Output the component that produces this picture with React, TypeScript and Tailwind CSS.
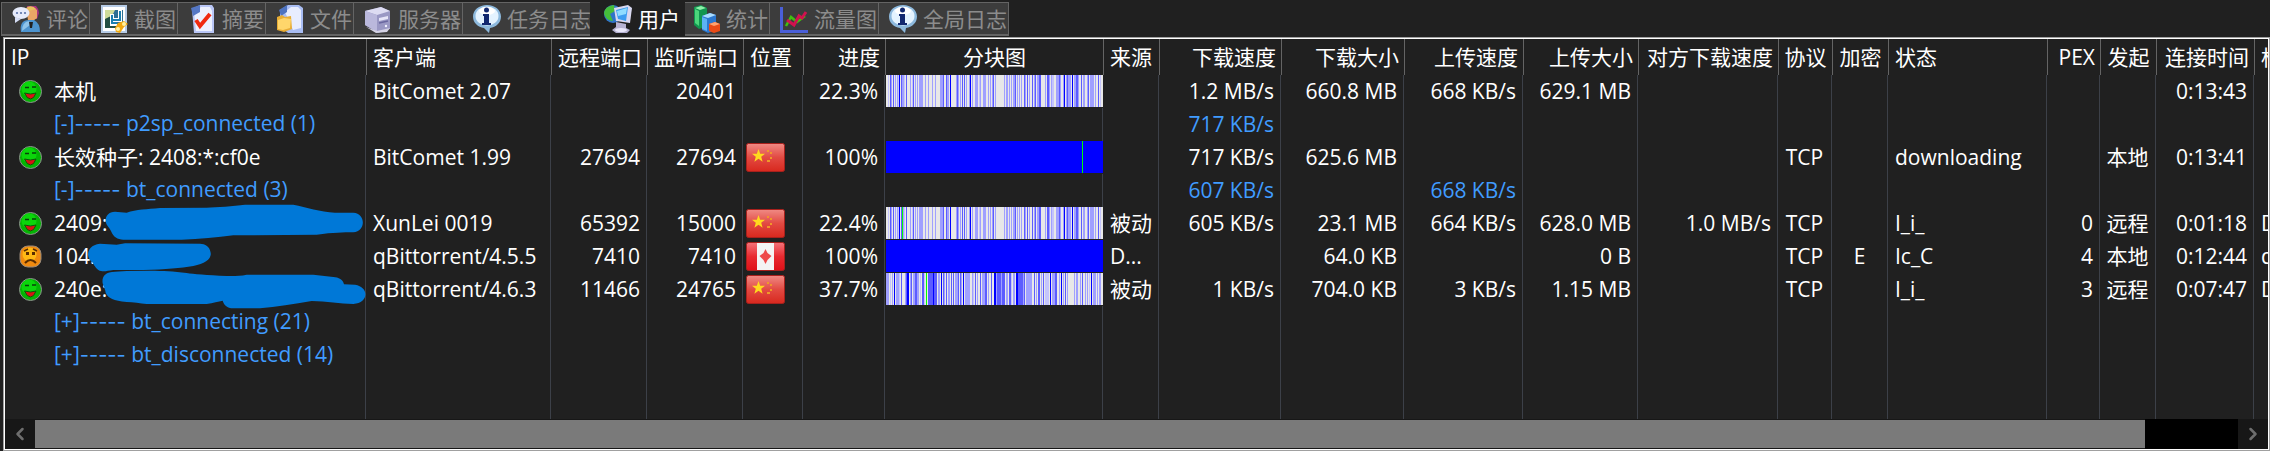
import { useState, type ReactNode } from "react";
import { ChevronLeft, ChevronRight } from "lucide-react";
import clsx from "clsx";

type Align = "left" | "right" | "center";
type Stripe = readonly [start: number, length: number, shade: string];

interface Column {
  readonly key: string;
  readonly label: string;
  readonly width: string;
  readonly align: Align;
  readonly headAlign?: Align;
}

interface PeerRow {
  readonly id: string;
  readonly kind: "peer" | "group";
  readonly name: string;
  readonly open?: boolean;
  readonly mood?: "happy" | "sad";
  readonly flag?: "cn" | "ca";
  readonly pieces?: { readonly base: string; readonly stripes: readonly Stripe[] };
  readonly mask?: { readonly viewBox: string; readonly path: string };
  readonly cells: Readonly<Record<string, string>>;
}

const COLUMNS: readonly Column[] = [
  { key: "ip", label: "IP", width: "w-[361px]", align: "left" },
  { key: "client", label: "客户端", width: "w-[185px]", align: "left" },
  { key: "remotePort", label: "远程端口", width: "w-[96px]", align: "right" },
  { key: "listenPort", label: "监听端口", width: "w-[96px]", align: "right" },
  { key: "flag", label: "位置", width: "w-[60px]", align: "left" },
  { key: "progress", label: "进度", width: "w-[82px]", align: "right" },
  { key: "pieces", label: "分块图", width: "w-[218px]", align: "center" },
  { key: "source", label: "来源", width: "w-[56px]", align: "left" },
  { key: "downSpeed", label: "下载速度", width: "w-[122px]", align: "right" },
  { key: "downSize", label: "下载大小", width: "w-[123px]", align: "right" },
  { key: "upSpeed", label: "上传速度", width: "w-[119px]", align: "right" },
  { key: "upSize", label: "上传大小", width: "w-[115px]", align: "right" },
  { key: "peerSpeed", label: "对方下载速度", width: "w-[140px]", align: "right" },
  { key: "protocol", label: "协议", width: "w-[54px]", align: "center" },
  { key: "encrypted", label: "加密", width: "w-[56px]", align: "center" },
  { key: "status", label: "状态", width: "w-[159px]", align: "left" },
  { key: "pex", label: "PEX", width: "w-[53px]", align: "right" },
  { key: "initiator", label: "发起", width: "w-[56px]", align: "center" },
  { key: "time", label: "连接时间", width: "w-[98px]", align: "right" },
  { key: "tag", label: "标识", width: "w-[90px]", align: "left" },
];

// Piece availability, from almost nothing to complete
const L = "#c4c4fc";
const M = "#a0a0ff";
const H = "#5c5cff";
const F = "#0000ff";
const ACTIVE = "#00ff00";

const SPARSE: readonly Stripe[] = [
  [2, 1, L], [4, 1, H], [5, 1, M], [7, 1, H], [9, 1, M], [11, 1, M], [12, 1, L], [13, 1, F], [15, 1, H], [16, 2, M],
  [18, 1, L], [20, 1, H], [24, 1, M], [26, 1, L], [27, 1, H], [29, 1, M], [31, 1, M], [33, 4, M], [39, 1, M],
  [42, 1, M], [46, 1, M], [49, 1, M], [54, 3, M], [57, 1, H], [60, 1, H], [61, 2, M], [64, 1, F], [70, 1, M],
  [71, 1, H], [72, 1, M], [74, 1, M], [76, 1, H], [78, 1, H], [80, 1, M], [83, 1, M], [84, 1, F], [86, 1, M],
  [89, 3, M], [93, 1, L], [94, 1, M], [97, 3, M], [102, 1, M], [104, 1, M], [106, 1, M], [107, 1, H], [109, 1, M],
  [118, 1, M], [120, 2, M], [123, 1, M], [125, 1, M], [127, 2, M], [129, 1, H], [131, 1, M], [133, 1, M],
  [135, 1, M], [138, 1, H], [139, 1, M], [141, 1, H], [143, 1, M], [146, 1, H], [148, 1, M], [149, 1, H],
  [151, 2, M], [153, 2, H], [159, 1, M], [161, 2, H], [163, 1, M], [165, 1, M], [166, 2, L], [170, 3, M],
  [173, 1, H], [174, 1, M], [177, 1, M], [178, 1, F], [180, 1, M], [181, 1, H], [182, 2, M], [184, 1, M],
  [186, 1, F], [188, 2, M], [190, 2, H], [192, 1, M], [195, 1, H], [197, 2, M], [201, 1, M], [202, 1, H],
  [204, 4, M], [209, 1, M], [212, 1, H], [214, 1, L],
];

const DENSE: readonly Stripe[] = [
  [0, 3, M], [4, 1, L], [6, 1, M], [8, 1, F], [10, 3, M], [13, 1, L], [15, 1, H], [19, 1, M], [20, 1, H], [21, 2, F],
  [24, 1, M], [25, 1, H], [27, 2, M], [29, 2, H], [31, 2, M], [34, 1, L], [36, 2, H], [38, 1, L], [42, 5, H],
  [47, 1, F], [48, 3, H], [52, 2, M], [55, 1, F], [57, 1, H], [58, 1, M], [60, 1, H], [62, 2, M], [65, 1, H],
  [67, 1, H], [69, 3, M], [72, 1, H], [74, 1, H], [75, 1, M], [77, 1, F], [79, 5, M], [86, 1, M], [87, 1, L],
  [89, 1, H], [91, 1, M], [94, 1, H], [96, 3, M], [99, 2, H], [102, 1, M], [105, 1, H], [108, 2, F], [110, 1, M],
  [111, 4, H], [115, 1, M], [116, 2, H], [118, 1, H], [120, 2, M], [123, 2, H], [125, 1, L], [127, 2, M],
  [130, 1, F], [131, 1, F], [132, 5, H], [137, 1, M], [138, 1, H], [140, 2, M], [142, 4, M], [148, 1, H],
  [150, 1, M], [152, 2, H], [155, 1, M], [157, 1, H], [159, 4, L], [164, 1, F], [166, 3, M], [169, 2, H],
  [173, 1, M], [175, 1, F], [177, 1, M], [179, 1, H], [181, 1, M], [188, 1, M], [190, 2, M], [194, 1, M],
  [196, 1, H], [199, 1, M], [201, 1, M], [203, 1, L], [205, 1, F], [207, 3, M], [211, 1, M], [213, 2, M],
];

const ROWS: readonly PeerRow[] = [
  {
    id: "local", kind: "peer", name: "本机", mood: "happy",
    pieces: { base: "#e8e8e8", stripes: SPARSE },
    cells: {
      client: "BitComet 2.07", listenPort: "20401", progress: "22.3%", downSpeed: "1.2 MB/s",
      downSize: "660.8 MB", upSpeed: "668 KB/s", upSize: "629.1 MB", time: "0:13:43",
    },
  },
  { id: "p2sp", kind: "group", name: "p2sp_connected (1)", open: true, cells: { downSpeed: "717 KB/s" } },
  {
    id: "seed", kind: "peer", name: "长效种子: 2408:*:cf0e", mood: "happy", flag: "cn",
    pieces: { base: F, stripes: [[196, 1, ACTIVE]] },
    cells: {
      client: "BitComet 1.99", remotePort: "27694", listenPort: "27694", progress: "100%", downSpeed: "717 KB/s",
      downSize: "625.6 MB", protocol: "TCP", status: "downloading", initiator: "本地", time: "0:13:41",
    },
  },
  {
    id: "bt", kind: "group", name: "bt_connected (3)", open: true,
    cells: { downSpeed: "607 KB/s", upSpeed: "668 KB/s" },
  },
  {
    id: "xunlei", kind: "peer", name: "2409:", mood: "happy", flag: "cn",
    pieces: { base: "#e8e8e8", stripes: [...SPARSE, [16, 1, ACTIVE]] },
    mask: {
      viewBox: "15 21 1083 99",
      path: "M345 35C325 35 315 50 317 65C320 78 330 84 334 95C340 110 352 118 370 119L545 119C600 118 650 112 700 106L950 104C1000 98 1030 97 1060 97C1098 95 1098 40 1060 38L1005 38C960 35 920 22 880 14L735 14C700 18 650 22 620 23L480 24C440 28 410 28 380 38Z",
    },
    cells: {
      client: "XunLei 0019", remotePort: "65392", listenPort: "15000", progress: "22.4%", source: "被动",
      downSpeed: "605 KB/s", downSize: "23.1 MB", upSpeed: "664 KB/s", upSize: "628.0 MB",
      peerSpeed: "1.0 MB/s", protocol: "TCP", status: "I_i_", pex: "0", initiator: "远程", time: "0:01:18", tag: "D",
    },
  },
  {
    id: "qb455", kind: "peer", name: "104.", mood: "sad", flag: "ca",
    pieces: { base: F, stripes: [] },
    mask: {
      viewBox: "15 120 1083 99",
      path: "M300 131C260 135 258 170 272 182C282 190 282 200 295 210C310 218 320 212 340 210L430 210C500 208 540 205 580 198C615 190 635 178 632 158C630 140 615 131 600 131L375 130L350 134Z",
    },
    cells: {
      client: "qBittorrent/4.5.5", remotePort: "7410", listenPort: "7410", progress: "100%", source: "D...",
      downSize: "64.0 KB", upSize: "0 B", protocol: "TCP", encrypted: "E", status: "Ic_C", pex: "4",
      initiator: "本地", time: "0:12:44", tag: "d",
    },
  },
  {
    id: "qb463", kind: "peer", name: "240e:", mood: "happy", flag: "cn",
    pieces: { base: "#e8e8e8", stripes: [...DENSE, [40, 1, ACTIVE]] },
    mask: {
      viewBox: "15 219 1083 99",
      path: "M345 215C315 215 305 230 308 250C312 262 316 270 317 278C325 295 340 302 380 306C400 306 420 311 440 312L620 312C640 308 655 305 668 302C672 315 680 324 700 325L780 325C830 320 880 312 935 303C980 303 1020 312 1060 312C1105 310 1110 262 1065 254L1032 253C1030 240 1015 231 1000 231L940 224L740 224C720 228 700 229 680 228C620 225 580 222 560 219C520 214 490 212 450 212L380 213Z",
    },
    cells: {
      client: "qBittorrent/4.6.3", remotePort: "11466", listenPort: "24765", progress: "37.7%", source: "被动",
      downSpeed: "1 KB/s", downSize: "704.0 KB", upSpeed: "3 KB/s", upSize: "1.15 MB", protocol: "TCP",
      status: "I_i_", pex: "3", initiator: "远程", time: "0:07:47", tag: "D",
    },
  },
  { id: "connecting", kind: "group", name: "bt_connecting (21)", open: false, cells: {} },
  { id: "disconnected", kind: "group", name: "bt_disconnected (14)", open: false, cells: {} },
];

function TabIcon({ children }: { readonly children: ReactNode }) {
  return (
    <svg viewBox="0 0 28 28" className="h-7 w-7 shrink-0" aria-hidden="true">
      {children}
    </svg>
  );
}

function CommentIcon() {
  return (
    <TabIcon>
      <path d="M15 1h9q3 3 3 7l-2 6h-7z" fill="#a8327e" />
      <path d="M14 3q7-3 11 2v8q-4 4-9 2z" fill="#eaa566" />
      <path d="M15 2q6-2 9 2l-7 2z" fill="#e8c15c" />
      <path d="M9 27q-2-12 8-12h5q6 3 6 12z" fill="#4d94cf" />
      <path d="M10 26q0-9 7-10l1 4z" fill="#8fc4ea" />
      <path d="M17 17h4l-1 6h-2z" fill="#222" />
      <ellipse cx="9" cy="8" rx="8.5" ry="6" fill="#e6ebfb" />
      <path d="M3 12v6l6-4z" fill="#d5ddf5" />
      <g fill="#5b72a8">
        <circle cx="5" cy="8" r="1.1" />
        <circle cx="9" cy="8" r="1.1" />
        <circle cx="13" cy="8" r="1.1" />
      </g>
    </TabIcon>
  );
}

function SnapshotIcon() {
  return (
    <TabIcon>
      <rect x="1" y="0" width="26" height="28" fill="#b6cbe6" />
      <rect x="3" y="2" width="22" height="24" fill="#fff" />
      <rect x="5" y="5" width="18" height="18" fill="#2e6f94" />
      <path d="M5 5h10l-4 8-6 3z" fill="#cfdc9a" />
      <path d="M5 14l6-3 5 5v7H5z" fill="#244f43" />
      <path d="M12 9v10h5M20 5v10h-8" stroke="#fff" strokeWidth="4" fill="none" />
      <path d="M12 10v8h5M20 6v9h-7" stroke="#1a7fb0" strokeWidth="2" fill="none" />
      <path d="M18 18l6-2 4 3-4 3-4 6-4-1-1-4z" fill="#f2a810" />
      <circle cx="24" cy="19" r="2" fill="#fff0a0" />
      <circle cx="18" cy="24" r="2" fill="#fff0a0" />
    </TabIcon>
  );
}

function SummaryIcon() {
  return (
    <TabIcon>
      <path d="M4 4L12 0h12l2 3v25H6z" fill="#b9c6f6" />
      <path d="M6 7l7-5h9l2 4v20H8z" fill="#edf1ff" />
      <path d="M3 3l9-3v7l-7 4z" fill="#5577c4" />
      <path d="M8 15l4 6L22 9" stroke="#f02a10" strokeWidth="4" fill="none" />
    </TabIcon>
  );
}

function FilesIcon() {
  return (
    <TabIcon>
      <path d="M4 5L12 0h11l4 3v25H12L4 22z" fill="#a9bdf3" />
      <path d="M9 7l6-5h7l3 3v18l-8 2z" fill="#e8edff" />
      <path d="M3 5l8-5v7l-6 4z" fill="#4e73c0" />
      <path d="M1 12l5-2 3 2 6-1 1 13-8 3-7-2z" fill="#e8ad35" />
      <path d="M2 15l6-2 7 1-1 9-7 2-5-1z" fill="#ffd66b" />
    </TabIcon>
  );
}

function ServerIcon() {
  return (
    <TabIcon>
      <path d="M1 6l16-4 9 4v18l-12 4L1 20z" fill="#9a98c4" />
      <path d="M1 6l16-4 9 4-13 4z" fill="#dddcf2" />
      <path d="M1 6l12 4v17L1 20z" fill="#bab8dc" />
      <path d="M15 13l9-2v3l-9 2z" fill="#e6e5f8" />
      <path d="M15 18l9-2" stroke="#6a68a0" strokeWidth="1.5" />
      <path d="M2 22l11 4 13-3-3 4-11 1z" fill="#d4d2e4" />
      <circle cx="22" cy="21" r="1.2" fill="#f1f1ff" />
    </TabIcon>
  );
}

function InfoIcon() {
  return (
    <TabIcon>
      <path d="M14 0C6 0 0 5 0 11.500S5 22 11 23l5 5 1-5c6-1 11-5 11-11.500S22 0 14 0z" fill="#8db9dd" />
      <ellipse cx="14" cy="11" rx="11.500" ry="9.500" fill="#e4f3ff" />
      <ellipse cx="14" cy="6" rx="8" ry="4" fill="#fff" />
      <circle cx="13.500" cy="5" r="2.500" fill="#12286f" />
      <path d="M10 9h6v9h2v2H9v-2h2v-7h-1z" fill="#12286f" />
    </TabIcon>
  );
}

function PeersIcon() {
  return (
    <TabIcon>
      <circle cx="9" cy="9" r="9" fill="#2f74c8" />
      <path d="M0 8q1-7 10-8l1 6-5 3 3 7q-8-1-9-8z" fill="#45bd3a" />
      <path d="M10 3l14-3 4 3-2 15-14-2z" fill="#d8d8f0" />
      <path d="M12 5l12-3-2 14-8-2z" fill="#3c9cf0" />
      <path d="M13 6l10-3-1 6-8 2z" fill="#8fdcff" />
      <path d="M12 17l10 2v4l4 2-3 3H12l-4-3 4-3z" fill="#b6b2d2" />
      <ellipse cx="17" cy="25" rx="6" ry="2" fill="#e9e7fa" />
    </TabIcon>
  );
}

function StatsIcon() {
  return (
    <TabIcon>
      <path d="M2 2l7-2 6 3v18l-8 3-5-4z" fill="#129650" />
      <path d="M3 3l6-2 5 2-6 2z" fill="#8df0a8" />
      <path d="M3 4l4 2v15l-4-3z" fill="#4bd67b" />
      <path d="M10 11l8-3 6 2v15l-8 3-6-3z" fill="#2c78d0" />
      <path d="M10 11l8-3 6 2-8 3z" fill="#a9dcff" />
      <path d="M10 12l5 2v12l-5-2z" fill="#5db2f5" />
      <path d="M17 19l6-2 5 2v7l-6 2-5-2z" fill="#ea4b16" />
      <path d="M17 19l6-2 5 2-6 2z" fill="#ffa270" />
    </TabIcon>
  );
}

function TrafficIcon() {
  return (
    <TabIcon>
      <path d="M1.500 2v24.500H28" stroke="#4a5fd8" strokeWidth="3" fill="none" />
      <path d="M6 21l5-9 6 5 8-6" stroke="#3fbf10" strokeWidth="2.500" fill="none" />
      <path d="M7 15l7 5 5-9 3 2 4-6" stroke="#d0124e" strokeWidth="3" fill="none" />
    </TabIcon>
  );
}

const TABS: readonly { readonly label: string; readonly icon: ReactNode }[] = [
  { label: "评论", icon: <CommentIcon /> },
  { label: "截图", icon: <SnapshotIcon /> },
  { label: "摘要", icon: <SummaryIcon /> },
  { label: "文件", icon: <FilesIcon /> },
  { label: "服务器", icon: <ServerIcon /> },
  { label: "任务日志", icon: <InfoIcon /> },
  { label: "用户", icon: <PeersIcon /> },
  { label: "统计", icon: <StatsIcon /> },
  { label: "流量图", icon: <TrafficIcon /> },
  { label: "全局日志", icon: <InfoIcon /> },
];

function Face({ mood }: { readonly mood: "happy" | "sad" }) {
  const happy = mood === "happy";
  return (
    <svg viewBox="0 0 23 23" className="h-[23px] w-[23px] shrink-0" aria-hidden="true">
      {happy ? (
        <>
          <circle cx="11.500" cy="11.500" r="11" fill="#04b404" stroke="#8f8f8f" />
          <circle cx="10" cy="9" r="7.500" fill="#0bd60b" />
          <path d="M6 7.500h4M13 7h4" stroke="#08400a" strokeWidth="1.500" />
          <path d="M5.500 13q6 2 11.500 0-2 6-5.500 6t-6-6z" fill="#d81414" stroke="#075a07" />
        </>
      ) : (
        <>
          <rect x="1" y="1" width="21" height="21" rx="8" fill="#f08a10" stroke="#9a8a7a" />
          <circle cx="10.500" cy="9.500" r="7" fill="#ffb814" />
          <path d="M5 6l4-2M14 4l4 2" stroke="#5a2c00" strokeWidth="1.500" />
          <path d="M7 7h3v3H7zM13 7h3v3h-3z" fill="#5a2c00" />
          <path d="M6 18q5.500-6 11 0" stroke="#5a2c00" strokeWidth="2" fill="none" />
        </>
      )}
    </svg>
  );
}

function Flag({ country }: { readonly country: "cn" | "ca" }) {
  return (
    <svg
      viewBox="0 0 39 29"
      className="h-[29px] w-[39px]"
      role="img"
      aria-label={country === "cn" ? "中国" : "加拿大"}
    >
      <defs>
        <linearGradient id={`flag-${country}`} x1="0" y1="0" x2="0" y2="1">
          <stop offset="0" stopColor={country === "cn" ? "#f08a84" : "#f4737a"} />
          <stop offset="0.500" stopColor={country === "cn" ? "#e24a42" : "#e82a30"} />
          <stop offset="1" stopColor={country === "cn" ? "#d8281e" : "#e01018"} />
        </linearGradient>
      </defs>
      <rect x="0.500" y="0.500" width="38" height="28" rx="2" fill={`url(#flag-${country})`} stroke="#a8201c" />
      {country === "cn" ? (
        <>
          <path d="M12.500 6l1.700 4.800h4.800l-3.800 3 1.400 4.900-4.100-2.900-4.100 2.900 1.400-4.900-3.800-3h4.800z" fill="#ffd91e" />
          <path d="M21 7h2v2h-2zM24 9h2v2h-2zM24 14h2v2h-2zM21 17h3v2h-3z" fill="#f0982a" />
        </>
      ) : (
        <>
          <rect x="11" y="1" width="17" height="27" fill="#f4f4f4" />
          <path d="M19.500 7l2 4 4 3-4 4-2 4-2-4-4-4 4-3z" fill="#ee4a4a" />
        </>
      )}
    </svg>
  );
}

function PieceMap({ base, stripes }: { readonly base: string; readonly stripes: readonly Stripe[] }) {
  return (
    <svg
      viewBox="0 0 217 32"
      preserveAspectRatio="none"
      shapeRendering="crispEdges"
      className="block h-8 w-full"
      role="img"
      aria-label="分块图"
    >
      <rect width="217" height="32" fill={base} />
      {stripes.map(([start, length, shade], index) => (
        <rect key={index} x={start} width={length} height="32" fill={shade} />
      ))}
    </svg>
  );
}

function alignClass(align: Align): string {
  if (align === "right") return "text-right";
  return align === "center" ? "text-center" : "text-left";
}

function NameCell({ row }: { readonly row: PeerRow }) {
  if (row.kind === "group") {
    return (
      <td className="border-r border-[#3c4048] p-0 pb-[2px] pl-[49px] text-left">
        <button type="button" aria-expanded={row.open} className="block leading-[30px]">
          {row.open ? "[-]" : "[+]"}
          <span className="font-['Inter',sans-serif] text-[20px]">-----</span> {row.name}
        </button>
      </td>
    );
  }
  return (
    <td className="relative border-r border-[#3c4048] p-0 pl-[14px]">
      <div className="flex items-center gap-3">
        {row.mood ? <Face mood={row.mood} /> : null}
        <span className="pb-[2px]">{row.name}</span>
      </div>
      {row.mask ? (
        <svg
          viewBox={row.mask.viewBox}
          className="absolute top-0 left-0 z-10 h-[33px] w-[361px] overflow-visible"
          aria-hidden="true"
        >
          <path d={row.mask.path} fill="#0078d7" />
        </svg>
      ) : null}
    </td>
  );
}

function PeerTable() {
  return (
    <table className="h-full w-full table-fixed border-separate border-spacing-0 leading-[30px] whitespace-nowrap">
      <colgroup>
        {COLUMNS.map((column) => (
          <col key={column.key} className={column.width} />
        ))}
      </colgroup>
      <thead>
        <tr className="h-9">
          {COLUMNS.map((column, index) => (
            <th
              key={column.key}
              scope="col"
              className={clsx(
                "p-0 font-normal",
                index > 0 && "border-l border-[#646464]",
                alignClass(column.align),
                column.align === "right" && "pr-[5px]",
                column.align === "left" && "pl-[6px]"
              )}
            >
              {column.label}
            </th>
          ))}
        </tr>
      </thead>
      <tbody>
        {ROWS.map((row) => (
          <tr key={row.id} className={clsx("h-[33px]", row.kind === "group" && "text-[#409cff]")}>
            <NameCell row={row} />
            {COLUMNS.slice(1).map((column) => {
              if (column.key === "pieces" && row.pieces) {
                return (
                  <td key={column.key} className="p-0 pl-px align-top">
                    <PieceMap base={row.pieces.base} stripes={row.pieces.stripes} />
                  </td>
                );
              }
              if (column.key === "flag") {
                return (
                  <td key={column.key} className="border-r border-[#3c4048] p-0 pl-[3px]">
                    {row.flag ? <Flag country={row.flag} /> : null}
                  </td>
                );
              }
              return (
                <td
                  key={column.key}
                  className={clsx(
                    "border-r border-[#3c4048] p-0 pb-[2px]",
                    alignClass(column.align),
                    column.align === "right" && "pr-[6px]",
                    column.align === "left" && "pl-[7px]"
                  )}
                >
                  {row.cells[column.key]}
                </td>
              );
            })}
          </tr>
        ))}
        {/* Empty space below the last peer keeps the column rules running down */}
        <tr aria-hidden="true">
          {COLUMNS.map((column) => (
            <td key={column.key} className="border-r border-[#3c4048] p-0" />
          ))}
        </tr>
      </tbody>
    </table>
  );
}

function ScrollBar() {
  return (
    <div className="flex h-[30px] shrink-0 bg-black">
      <button
        type="button"
        aria-label="向左滚动"
        className="flex w-[30px] items-center justify-center bg-[#171717] text-[#6e6e6e]"
      >
        <ChevronLeft className="h-5 w-5" strokeWidth={3} aria-hidden="true" />
      </button>
      <div className="mr-[93px] flex-1 border-y border-[#171717] bg-[#7a7a7a]" />
      <button
        type="button"
        aria-label="向右滚动"
        className="flex w-[30px] items-center justify-center bg-[#171717] text-[#6e6e6e]"
      >
        <ChevronRight className="h-5 w-5" strokeWidth={3} aria-hidden="true" />
      </button>
    </div>
  );
}

export default function App() {
  const [activeTab, setActiveTab] = useState<string>("用户");

  return (
    <div className="flex h-screen flex-col overflow-hidden bg-[#202020] font-['Open_Sans','Noto_Sans_CJK_SC',sans-serif] text-[21px] leading-8 text-white">
      <div role="tablist" className="flex h-[37px] shrink-0 items-start pt-[2px] pl-px">
        {TABS.map(({ label, icon }, index) => {
          const selected = label === activeTab;
          return (
            <button
              key={label}
              type="button"
              role="tab"
              aria-selected={selected}
              onClick={() => setActiveTab(label)}
              className={clsx(
                "flex shrink-0 items-center gap-[6px] whitespace-nowrap",
                selected
                  ? "z-10 -mx-[3px] -mt-[2px] h-[37px] bg-[#202020] pr-[5px] pl-[14px] text-white"
                  : "h-[34px] border-t border-r border-b-2 border-[#646464] bg-[#3c3c3c] pr-px pl-[10px] text-[#8c8c8c]",
                !selected && index === 0 && "border-l"
              )}
            >
              {icon}
              <span>{label}</span>
            </button>
          );
        })}
      </div>
      <div className="ml-[3px] flex min-h-0 flex-1 flex-col border border-[#a0a0a0]">
        <div className="flex min-h-0 flex-1 flex-col border border-white">
          <div className="min-h-0 flex-1 overflow-hidden">
            <PeerTable />
          </div>
          <ScrollBar />
        </div>
      </div>
    </div>
  );
}
